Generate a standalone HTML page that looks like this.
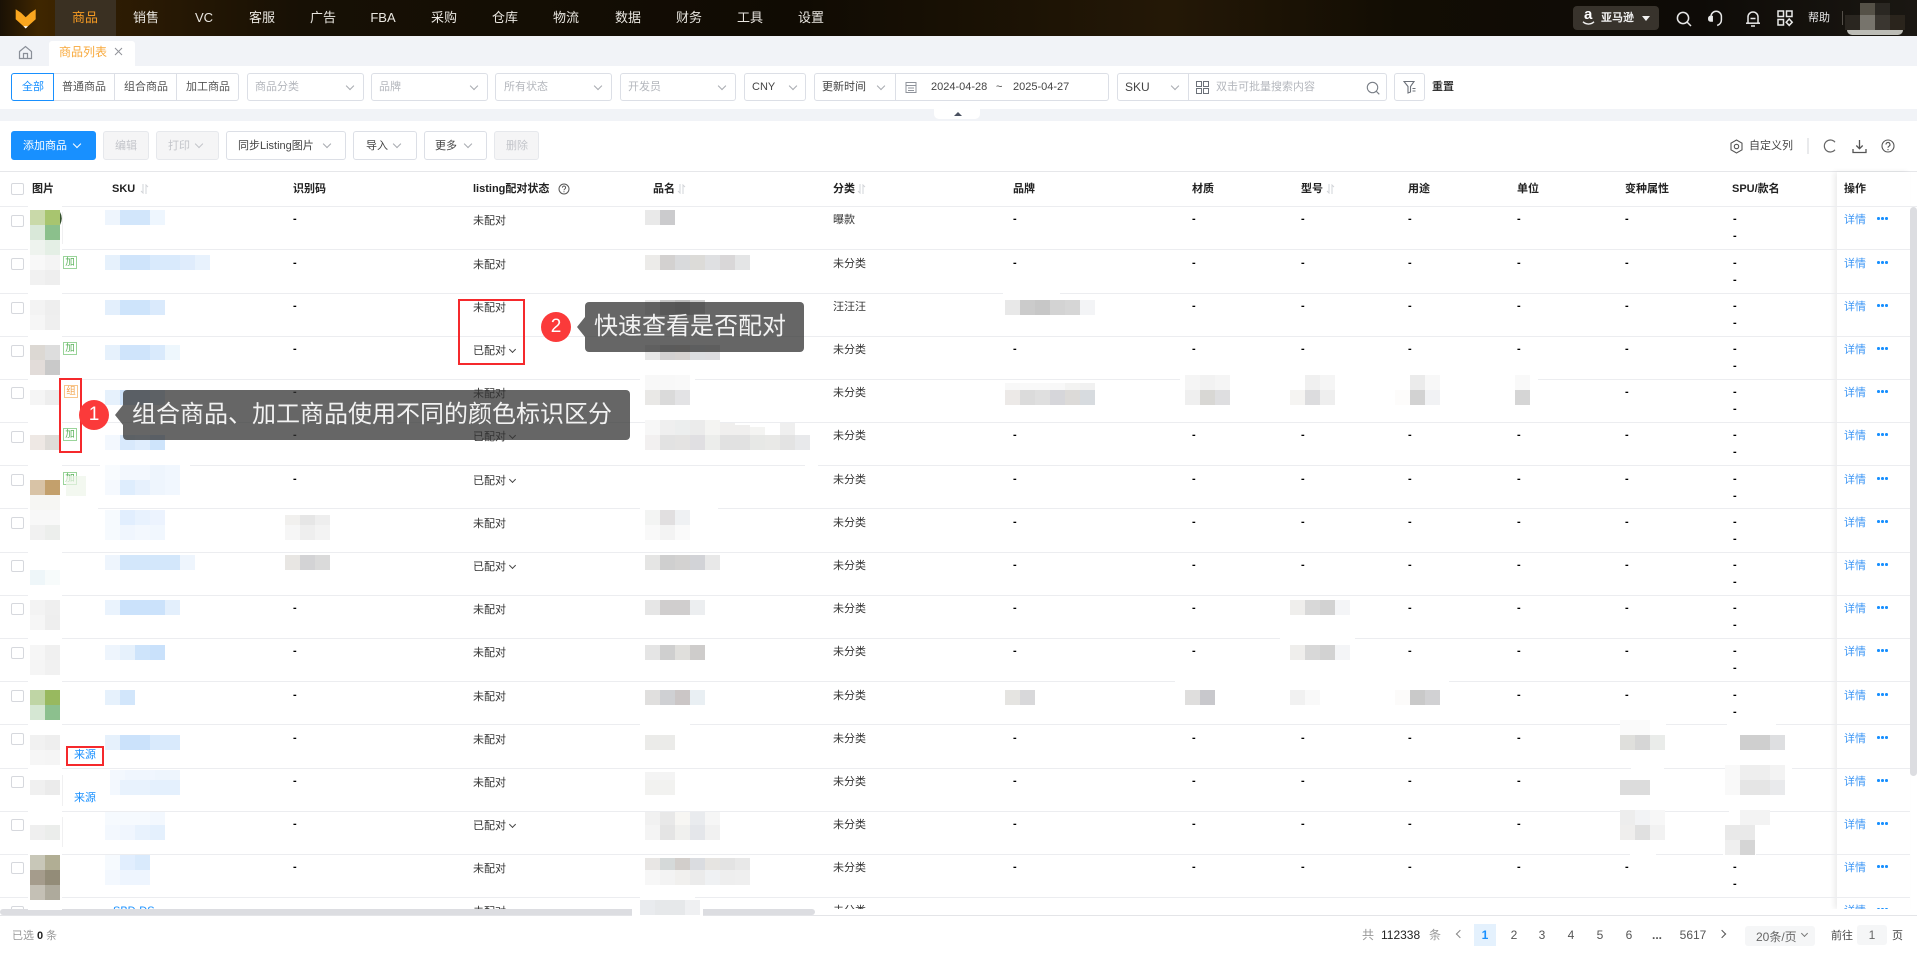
<!DOCTYPE html>
<html lang="zh-CN">
<head>
<meta charset="utf-8">
<title>商品列表</title>
<style>
html,body{margin:0;padding:0;background:#fff}
body{position:relative;width:1917px;height:953px;overflow:hidden;font-family:"Liberation Sans","Noto Sans CJK SC",sans-serif;font-size:11px;color:#333}
.t{position:absolute;white-space:nowrap;line-height:14px;font-size:11px}
.box{position:absolute;box-sizing:border-box}
.ch{position:absolute;width:5px;height:5px;border:solid #a8abb0;border-width:0 1px 1px 0;transform:rotate(45deg)}
.nav{position:absolute;top:0;height:36px;line-height:36px;width:60px;text-align:center;color:#e9e6e0;font-size:13px}
.sel{position:absolute;top:73px;height:28px;box-sizing:border-box;border:1px solid #dcdfe6;border-radius:3px;background:#fff}
.ph{color:#b4b7bd;top:80px}
.dk{color:#444;top:80px}
.btn{position:absolute;top:131px;height:29px;box-sizing:border-box;border:1px solid #dcdfe6;border-radius:3px;background:#fff}
.dis{background:#f5f5f6;border-color:#e6e8ec}
.th{position:absolute;top:182px;line-height:14px;font-size:11px;font-weight:bold;color:#222;white-space:nowrap}
.so{position:absolute;top:184px}
.l{position:absolute;left:0;width:1910px;height:1px;background:#ecedf0}
.wrap{position:absolute;left:0;top:0;width:1917px;height:909px;overflow:hidden}
.r{position:absolute;left:0;width:1910px;height:14px}
.r i{position:absolute;top:0;font-style:normal;white-space:nowrap;line-height:14px;font-size:11px;color:#333}
.r .a,.r .d,.r .e,.r .f,.r .g,.r .h,.r .i,.r .j,.r .j2{top:-1px;color:#000;font-weight:bold}
.r .a{left:293px}.r .b{left:473px;top:1px}.r .c{left:833px}.r .d{left:1013px}.r .e{left:1192px}.r .f{left:1301px}.r .g{left:1408px}.r .h{left:1517px}.r .i{left:1625px}.r .j{left:1733px}.r .j2{left:1733px;top:16px}
.r .k{left:1844px;color:#3c96f5}
.r .m{left:1877px;top:4px;width:2.5px;height:2.5px;background:#1890ff;border-radius:50%;box-shadow:4px 0 #1890ff,8px 0 #1890ff}
.r .v{position:absolute;left:510px;top:4px;width:4px;height:4px;border:solid #444;border-width:0 1px 1px 0;transform:rotate(45deg)}
.cb{position:absolute;left:11px;width:13px;height:12px;box-sizing:border-box;border:1px solid #d6d8dd;border-radius:2px;background:#fff}
.tag{position:absolute;width:14px;height:13px;box-sizing:border-box;border:1px solid #9ad49a;color:#58b158;font-size:9.5px;line-height:11px;text-align:center;background:#fff}
svg.m{position:absolute;left:0;top:0}
svg.m rect{width:15px;height:15px}
.red{position:absolute;box-sizing:border-box;border:2px solid #f5292c}
.num{position:absolute;width:30px;height:30px;border-radius:50%;background:#fb3a3a;color:#fff;font-size:19px;line-height:30px;text-align:center}
.tip{position:absolute;background:rgba(51,51,51,.75);border-radius:4px;color:#f2f2f2;font-size:24px;line-height:50px;white-space:nowrap}
.tipa{position:absolute;width:0;height:0;border-top:10px solid transparent;border-bottom:10px solid transparent;border-right:8px solid rgba(51,51,51,.75)}
.pg{position:absolute;top:928px;width:20px;text-align:center;line-height:14px;font-size:12px;color:#555}
</style>
</head>
<body>

<!-- top header -->
<div class="box" style="left:0;top:0;width:1917px;height:36px;background:linear-gradient(90deg,#1a1105 0,#3f2600 38px,#2e1c03 110px,#171005 300px,#100b03 800px,#241806 1170px,#120d04 1400px,#0e0b07 1700px,#1a1712 100%)"></div>
<svg style="position:absolute;left:0;top:0" width="60" height="36" viewBox="0 0 60 36"><path d="M15.7 9.3L21 12.8 25.7 17.3 30.5 12.8 35.7 9.3V19.3L25.7 28.3 15.7 19.3Z" fill="#f9a61f"/><path d="M23.4 26.2H28L25.7 28.5Z" fill="#fff"/></svg>
<div class="box" style="left:55px;top:0;width:61px;height:36px;background:#3a3022"></div>
<div class="nav" style="left:55px;color:#f59a23">商品</div>
<div class="nav" style="left:116px">销售</div>
<div class="nav" style="left:174px">VC</div>
<div class="nav" style="left:232px">客服</div>
<div class="nav" style="left:293px">广告</div>
<div class="nav" style="left:353px">FBA</div>
<div class="nav" style="left:414px">采购</div>
<div class="nav" style="left:475px">仓库</div>
<div class="nav" style="left:536px">物流</div>
<div class="nav" style="left:598px">数据</div>
<div class="nav" style="left:659px">财务</div>
<div class="nav" style="left:720px">工具</div>
<div class="nav" style="left:781px">设置</div>

<div class="box" style="left:1573px;top:6px;width:86px;height:24px;background:#38332c;border-radius:4px"></div>
<div class="t" style="left:1584px;top:8px;color:#fff;font-size:15px;font-weight:bold">a</div>
<svg style="position:absolute;left:1582px;top:21px" width="13" height="5" viewBox="0 0 13 5"><path d="M1 0.8C4 3.8 9 3.8 12 0.8" stroke="#f2f2f2" stroke-width="1.4" fill="none"/></svg>
<div class="t" style="left:1601px;top:11px;color:#f2f2f2;font-weight:bold">亚马逊</div>
<div class="box" style="left:1642px;top:16px;width:0;height:0;border-left:4px solid transparent;border-right:4px solid transparent;border-top:5px solid #f2f2f2"></div>
<svg style="position:absolute;left:1675px;top:10px" width="18" height="18" viewBox="0 0 18 18" fill="none" stroke="#e8e8e8" stroke-width="1.5"><circle cx="8" cy="8" r="5.6"/><path d="M12 12l4 4"/></svg>
<svg style="position:absolute;left:1707px;top:10px" width="18" height="17" viewBox="0 0 18 17" fill="none" stroke="#e8e8e8" stroke-width="1.5"><path d="M4 6.5a5.2 5.2 0 0 1 10.4 0V10c0 3-2 4.6-4.2 5.5"/><path d="M3.4 6.5h1.8v4.5H3.4a1.6 1.6 0 0 1-1.6-1.6V8.1a1.6 1.6 0 0 1 1.6-1.6z" fill="#e8e8e8"/></svg>
<svg style="position:absolute;left:1744px;top:10px" width="18" height="18" viewBox="0 0 18 18" fill="none" stroke="#e8e8e8" stroke-width="1.5"><path d="M4 13V7a5 5 0 0 1 10 0v6"/><path d="M2 13.2h14"/><path d="M7 16h4"/><path d="M6.5 8.5h5"/></svg>
<svg style="position:absolute;left:1776px;top:9px" width="18" height="18" viewBox="0 0 18 18" fill="none" stroke="#e8e8e8" stroke-width="1.5"><rect x="2" y="2" width="5.5" height="5.5"/><rect x="10.5" y="2" width="5.5" height="5.5"/><rect x="2" y="10.5" width="5.5" height="5.5"/><path d="M13.2 10l3 3.2-3 3.2-3-3.2z"/></svg>
<div class="t" style="left:1808px;top:11px;color:#e8e8e8">帮助</div>
<div class="box" style="left:1842px;top:11px;width:1px;height:14px;background:#55504a"></div>
<div class="box" style="left:1860px;top:3px;width:15px;height:12px;background:#555147"></div>
<div class="box" style="left:1875px;top:3px;width:15px;height:12px;background:#2a2722"></div>
<div class="box" style="left:1845px;top:15px;width:15px;height:15px;background:#2a2620"></div>
<div class="box" style="left:1860px;top:15px;width:15px;height:15px;background:#77746c"></div>
<div class="box" style="left:1875px;top:15px;width:15px;height:15px;background:#3a3630"></div>
<div class="box" style="left:1890px;top:15px;width:15px;height:15px;background:#2a241c"></div>
<div class="box" style="left:1847px;top:30px;width:56px;height:5px;background:#bcbcb6;border-radius:0 0 6px 6px"></div>

<!-- tab bar -->
<div class="box" style="left:0;top:36px;width:1917px;height:30px;background:#f1f3f7"></div>
<svg style="position:absolute;left:18px;top:45px" width="15" height="15" viewBox="0 0 15 15" fill="none" stroke="#8a8f98" stroke-width="1.2"><path d="M1.5 6.5L7.5 1.5l6 5V13.5h-12z"/><path d="M5.5 13.5V8.5h4v5"/></svg>
<div class="box" style="left:49px;top:41px;width:86px;height:25px;background:#fff;border-radius:3px 3px 0 0"></div>
<div class="t" style="left:59px;top:45px;font-size:12px;color:#f8a93c">商品列表</div>
<svg style="position:absolute;left:114px;top:47px" width="9" height="9" viewBox="0 0 9 9" stroke="#909399" stroke-width="1"><path d="M1 1l7 7M8 1L1 8"/></svg>

<!-- filter bar -->
<div class="box" style="left:0;top:66px;width:1917px;height:43px;background:#fff"></div>
<div class="box" style="left:0;top:109px;width:1917px;height:12px;background:#f1f3f7"></div>
<div class="box" style="left:934px;top:109px;width:46px;height:10px;background:#fff;border-radius:0 0 5px 5px"></div>
<div class="box" style="left:954px;top:112px;width:0;height:0;border-left:4px solid transparent;border-right:4px solid transparent;border-bottom:4px solid #4a5160"></div>

<div class="sel" style="left:11px;width:228px"></div>
<div class="box" style="left:11px;top:73px;width:43px;height:28px;border:1px solid #1890ff;border-radius:3px 0 0 3px;background:#fff"></div>
<div class="box" style="left:114px;top:74px;width:1px;height:26px;background:#dcdfe6"></div>
<div class="box" style="left:176px;top:74px;width:1px;height:26px;background:#dcdfe6"></div>
<div class="t" style="left:22px;top:80px;color:#1890ff">全部</div>
<div class="t" style="left:62px;top:80px;color:#555">普通商品</div>
<div class="t" style="left:124px;top:80px;color:#555">组合商品</div>
<div class="t" style="left:186px;top:80px;color:#555">加工商品</div>

<div class="sel" style="left:247px;width:117px"></div><div class="t ph" style="left:255px">商品分类</div><div class="ch" style="left:347px;top:83px"></div>
<div class="sel" style="left:371px;width:117px"></div><div class="t ph" style="left:379px">品牌</div><div class="ch" style="left:471px;top:83px"></div>
<div class="sel" style="left:495px;width:117px"></div><div class="t ph" style="left:504px">所有状态</div><div class="ch" style="left:595px;top:83px"></div>
<div class="sel" style="left:620px;width:116px"></div><div class="t ph" style="left:628px">开发员</div><div class="ch" style="left:719px;top:83px"></div>
<div class="sel" style="left:744px;width:62px"></div><div class="t dk" style="left:752px">CNY</div><div class="ch" style="left:790px;top:83px"></div>
<div class="sel" style="left:814px;width:295px"></div><div class="t dk" style="left:822px">更新时间</div><div class="ch" style="left:878px;top:83px"></div>
<div class="box" style="left:895px;top:74px;width:1px;height:26px;background:#dcdfe6"></div>
<svg style="position:absolute;left:905px;top:81px" width="12" height="12" viewBox="0 0 12 12" fill="none" stroke="#8f939b"><rect x="1" y="1.5" width="10" height="10"/><path d="M1 4.5h10M3 7h6M3 9.5h6"/></svg>
<div class="t dk" style="left:931px">2024-04-28</div>
<div class="t dk" style="left:996px">~</div>
<div class="t dk" style="left:1013px">2025-04-27</div>

<div class="sel" style="left:1117px;width:270px"></div>
<div class="t dk" style="left:1125px;font-size:12px">SKU</div><div class="ch" style="left:1172px;top:83px"></div>
<div class="box" style="left:1188px;top:74px;width:1px;height:26px;background:#dcdfe6"></div>
<svg style="position:absolute;left:1196px;top:81px" width="13" height="13" viewBox="0 0 13 13" fill="none" stroke="#6c7179"><rect x="0.5" y="0.5" width="5" height="5"/><rect x="7.5" y="0.5" width="5" height="5"/><rect x="0.5" y="7.5" width="5" height="5"/><rect x="7.5" y="7.5" width="5" height="5"/></svg>
<div class="t ph" style="left:1216px">双击可批量搜索内容</div>
<svg style="position:absolute;left:1366px;top:81px" width="14" height="14" viewBox="0 0 14 14" fill="none" stroke="#7a7f87" stroke-width="1.1"><circle cx="6.5" cy="6.5" r="5.2"/><path d="M10.3 10.3l3 3"/></svg>
<div class="sel" style="left:1394px;width:31px"></div>
<svg style="position:absolute;left:1403px;top:80px" width="14" height="14" viewBox="0 0 14 14" fill="none" stroke="#6c7179" stroke-width="1.1"><path d="M1 1.5h10L7.5 6.5V12L5 13V6.5z"/><path d="M9.5 8.5h3M9.5 11h3"/></svg>
<div class="t" style="left:1432px;top:80px;color:#333;font-weight:bold">重置</div>

<!-- toolbar -->
<div class="btn" style="left:11px;width:85px;background:#1890ff;border-color:#1890ff"></div>
<div class="t" style="left:23px;top:139px;color:#fff">添加商品</div>
<div class="ch" style="left:74px;top:141px;border-color:#fff"></div>
<div class="btn dis" style="left:103px;width:46px"></div><div class="t" style="left:115px;top:139px;color:#c3c5ca">编辑</div>
<div class="btn dis" style="left:156px;width:63px"></div><div class="t" style="left:168px;top:139px;color:#c3c5ca">打印</div><div class="ch" style="left:196px;top:141px;border-color:#c3c5ca"></div>
<div class="btn" style="left:226px;width:120px"></div><div class="t" style="left:238px;top:139px;color:#444">同步Listing图片</div><div class="ch" style="left:324px;top:141px"></div>
<div class="btn" style="left:353px;width:64px"></div><div class="t" style="left:366px;top:139px;color:#444">导入</div><div class="ch" style="left:394px;top:141px"></div>
<div class="btn" style="left:424px;width:63px"></div><div class="t" style="left:435px;top:139px;color:#444">更多</div><div class="ch" style="left:465px;top:141px"></div>
<div class="btn dis" style="left:494px;width:45px"></div><div class="t" style="left:506px;top:139px;color:#c3c5ca">删除</div>

<svg style="position:absolute;left:1729px;top:139px" width="15" height="15" viewBox="0 0 15 15" fill="none" stroke="#555" stroke-width="1.1"><path d="M7.5 1L13 4.2v6.6L7.5 14 2 10.8V4.2z"/><circle cx="7.5" cy="7.5" r="2.2"/></svg>
<div class="t" style="left:1749px;top:139px;color:#444">自定义列</div>
<div class="box" style="left:1807px;top:138px;width:2px;height:16px;background:#e9eaec"></div>
<svg style="position:absolute;left:1823px;top:139px" width="14" height="14" viewBox="0 0 14 14" fill="none" stroke="#666" stroke-width="1.2"><path d="M12 3.2A6 6 0 1 0 12 10.8"/></svg>
<svg style="position:absolute;left:1852px;top:139px" width="15" height="15" viewBox="0 0 15 15" fill="none" stroke="#555" stroke-width="1.3"><path d="M7.5 1v8.5M4.3 6.5l3.2 3.2 3.2-3.2"/><path d="M1 10v3.5h13V10"/></svg>
<svg style="position:absolute;left:1881px;top:139px" width="14" height="14" viewBox="0 0 14 14" fill="none" stroke="#555" stroke-width="1.1"><circle cx="7" cy="7" r="6"/><path d="M5 5.5a2 2 0 1 1 3 1.7c-.7.4-1 .8-1 1.6"/><path d="M7 10v1.2"/></svg>

<!-- table head -->
<div class="box" style="left:0;top:171px;width:1917px;height:1px;background:#e6e7ea"></div>
<div class="box" style="left:1837px;top:172px;width:73px;height:737px;background:#fff;box-shadow:-3px 0 5px rgba(0,0,0,.07)"></div>
<div class="cb" style="top:183px"></div>
<div class="th" style="left:32px">图片</div>
<div class="th" style="left:112px">SKU</div>
<svg class="so" style="left:140px" width="9" height="10" viewBox="0 0 9 10" fill="none" stroke="#d2d4d8"><path d="M3 0v9L1 7M6 10V1l2 2"/></svg>
<div class="th" style="left:293px">识别码</div>
<div class="th" style="left:473px">listing配对状态</div>
<svg style="position:absolute;left:558px;top:183px" width="12" height="12" viewBox="0 0 12 12" fill="none" stroke="#555"><circle cx="6" cy="6" r="5"/><path d="M4.4 4.6a1.6 1.6 0 1 1 2.4 1.4c-.5.3-.8.6-.8 1.2M6 8.3v1"/></svg>
<div class="th" style="left:653px">品名</div>
<svg class="so" style="left:677px" width="9" height="10" viewBox="0 0 9 10" fill="none" stroke="#d2d4d8"><path d="M3 0v9L1 7M6 10V1l2 2"/></svg>
<div class="th" style="left:833px">分类</div>
<svg class="so" style="left:857px" width="9" height="10" viewBox="0 0 9 10" fill="none" stroke="#d2d4d8"><path d="M3 0v9L1 7M6 10V1l2 2"/></svg>
<div class="th" style="left:1013px">品牌</div>
<div class="th" style="left:1192px">材质</div>
<div class="th" style="left:1301px">型号</div>
<svg class="so" style="left:1326px" width="9" height="10" viewBox="0 0 9 10" fill="none" stroke="#d2d4d8"><path d="M3 0v9L1 7M6 10V1l2 2"/></svg>
<div class="th" style="left:1408px">用途</div>
<div class="th" style="left:1517px">单位</div>
<div class="th" style="left:1625px">变种属性</div>
<div class="th" style="left:1732px">SPU/款名</div>
<div class="th" style="left:1844px">操作</div>

<!-- row lines -->
<div class="l" style="top:206px;width:1917px"></div><div class="l" style="top:249px"></div><div class="l" style="top:293px"></div><div class="l" style="top:336px"></div><div class="l" style="top:379px"></div><div class="l" style="top:422px"></div><div class="l" style="top:465px"></div><div class="l" style="top:508px"></div><div class="l" style="top:552px"></div><div class="l" style="top:595px"></div><div class="l" style="top:638px"></div><div class="l" style="top:681px"></div><div class="l" style="top:724px"></div><div class="l" style="top:768px"></div><div class="l" style="top:811px"></div><div class="l" style="top:854px"></div><div class="l" style="top:897px"></div>

<!-- rows -->
<div class="wrap">
<div class="cb" style="top:215px"></div><div class="cb" style="top:258px"></div><div class="cb" style="top:302px"></div><div class="cb" style="top:345px"></div><div class="cb" style="top:387px"></div><div class="cb" style="top:431px"></div><div class="cb" style="top:474px"></div><div class="cb" style="top:517px"></div><div class="cb" style="top:560px"></div><div class="cb" style="top:603px"></div><div class="cb" style="top:647px"></div><div class="cb" style="top:690px"></div><div class="cb" style="top:733px"></div><div class="cb" style="top:776px"></div><div class="cb" style="top:819px"></div><div class="cb" style="top:862px"></div><div class="cb" style="top:906px"></div>

<div class="r" style="top:213px"><i class="a">-</i><i class="b">未配对</i><i class="c">曝款</i><i class="d">-</i><i class="e">-</i><i class="f">-</i><i class="g">-</i><i class="h">-</i><i class="i">-</i><i class="j">-</i><i class="j2">-</i><i class="k">详情</i><i class="m"></i></div>
<div class="r" style="top:257px"><i class="a">-</i><i class="b">未配对</i><i class="c">未分类</i><i class="d">-</i><i class="e">-</i><i class="f">-</i><i class="g">-</i><i class="h">-</i><i class="i">-</i><i class="j">-</i><i class="j2">-</i><i class="k">详情</i><i class="m"></i></div>
<div class="r" style="top:300px"><i class="a">-</i><i class="b">未配对</i><i class="c">汪汪汪</i><i class="e">-</i><i class="f">-</i><i class="g">-</i><i class="h">-</i><i class="i">-</i><i class="j">-</i><i class="j2">-</i><i class="k">详情</i><i class="m"></i></div>
<div class="r" style="top:343px"><i class="a">-</i><i class="b">已配对</i><i class="v"></i><i class="c">未分类</i><i class="d">-</i><i class="e">-</i><i class="f">-</i><i class="g">-</i><i class="h">-</i><i class="i">-</i><i class="j">-</i><i class="j2">-</i><i class="k">详情</i><i class="m"></i></div>
<div class="r" style="top:386px"><i class="a">-</i><i class="b">未配对</i><i class="c">未分类</i><i class="i">-</i><i class="j">-</i><i class="j2">-</i><i class="k">详情</i><i class="m"></i></div>
<div class="r" style="top:429px"><i class="a">-</i><i class="b">已配对</i><i class="v"></i><i class="c">未分类</i><i class="d">-</i><i class="e">-</i><i class="f">-</i><i class="g">-</i><i class="h">-</i><i class="i">-</i><i class="j">-</i><i class="j2">-</i><i class="k">详情</i><i class="m"></i></div>
<div class="r" style="top:473px"><i class="a">-</i><i class="b">已配对</i><i class="v"></i><i class="c">未分类</i><i class="d">-</i><i class="e">-</i><i class="f">-</i><i class="g">-</i><i class="h">-</i><i class="i">-</i><i class="j">-</i><i class="j2">-</i><i class="k">详情</i><i class="m"></i></div>
<div class="r" style="top:516px"><i class="b">未配对</i><i class="c">未分类</i><i class="d">-</i><i class="e">-</i><i class="f">-</i><i class="g">-</i><i class="h">-</i><i class="i">-</i><i class="j">-</i><i class="j2">-</i><i class="k">详情</i><i class="m"></i></div>
<div class="r" style="top:559px"><i class="b">已配对</i><i class="v"></i><i class="c">未分类</i><i class="d">-</i><i class="e">-</i><i class="f">-</i><i class="g">-</i><i class="h">-</i><i class="i">-</i><i class="j">-</i><i class="j2">-</i><i class="k">详情</i><i class="m"></i></div>
<div class="r" style="top:602px"><i class="a">-</i><i class="b">未配对</i><i class="c">未分类</i><i class="d">-</i><i class="e">-</i><i class="g">-</i><i class="h">-</i><i class="i">-</i><i class="j">-</i><i class="j2">-</i><i class="k">详情</i><i class="m"></i></div>
<div class="r" style="top:645px"><i class="a">-</i><i class="b">未配对</i><i class="c">未分类</i><i class="d">-</i><i class="e">-</i><i class="g">-</i><i class="h">-</i><i class="i">-</i><i class="j">-</i><i class="j2">-</i><i class="k">详情</i><i class="m"></i></div>
<div class="r" style="top:689px"><i class="a">-</i><i class="b">未配对</i><i class="c">未分类</i><i class="h">-</i><i class="i">-</i><i class="j">-</i><i class="j2">-</i><i class="k">详情</i><i class="m"></i></div>
<div class="r" style="top:732px"><i class="a">-</i><i class="b">未配对</i><i class="c">未分类</i><i class="d">-</i><i class="e">-</i><i class="f">-</i><i class="g">-</i><i class="h">-</i><i class="k">详情</i><i class="m"></i></div>
<div class="r" style="top:775px"><i class="a">-</i><i class="b">未配对</i><i class="c">未分类</i><i class="d">-</i><i class="e">-</i><i class="f">-</i><i class="g">-</i><i class="h">-</i><i class="k">详情</i><i class="m"></i></div>
<div class="r" style="top:818px"><i class="a">-</i><i class="b">已配对</i><i class="v"></i><i class="c">未分类</i><i class="d">-</i><i class="e">-</i><i class="f">-</i><i class="g">-</i><i class="h">-</i><i class="k">详情</i><i class="m"></i></div>
<div class="r" style="top:861px"><i class="a">-</i><i class="b">未配对</i><i class="c">未分类</i><i class="d">-</i><i class="e">-</i><i class="f">-</i><i class="g">-</i><i class="h">-</i><i class="i">-</i><i class="j">-</i><i class="j2">-</i><i class="k">详情</i><i class="m"></i></div>
<div class="r" style="top:904px"><i style="left:113px;color:#1890ff">SBD-DS</i><i class="b">未配对</i><i class="c">未分类</i><i class="k">详情</i><i class="m"></i></div>
</div>

<!-- footer -->
<div class="box" style="left:0;top:909px;width:1917px;height:44px;background:#fff"></div>
<div class="box" style="left:0;top:909px;width:815px;height:6px;background:#dcdde1;border-radius:3px"></div>
<div class="box" style="left:0;top:915px;width:1917px;height:1px;background:#e4e5e8"></div>
<div class="box" style="left:1910px;top:207px;width:7px;height:569px;background:#dcdde1;border-radius:4px"></div>
<div class="t" style="left:12px;top:929px;color:#999">已选</div>
<div class="t" style="left:37px;top:929px;color:#222;font-weight:bold">0</div>
<div class="t" style="left:46px;top:929px;color:#999">条</div>
<div class="t" style="left:1362px;top:928px;color:#999;font-size:12px">共</div>
<div class="t" style="left:1381px;top:928px;color:#222;font-size:12px">112338</div>
<div class="t" style="left:1429px;top:928px;color:#999;font-size:12px">条</div>
<div class="box" style="left:1457px;top:931px;width:6px;height:6px;border:solid #888;border-width:0 0 1px 1px;transform:rotate(45deg)"></div>
<div class="box" style="left:1474px;top:924px;width:22px;height:22px;background:#e4f1fd"></div>
<div class="pg" style="left:1475px;color:#1890ff;font-weight:bold">1</div>
<div class="pg" style="left:1504px">2</div>
<div class="pg" style="left:1532px">3</div>
<div class="pg" style="left:1561px">4</div>
<div class="pg" style="left:1590px">5</div>
<div class="pg" style="left:1619px">6</div>
<div class="pg" style="left:1647px;font-weight:bold">...</div>
<div class="pg" style="left:1673px;width:40px">5617</div>
<div class="box" style="left:1719px;top:931px;width:6px;height:6px;border:solid #555;border-width:1px 1px 0 0;transform:rotate(45deg)"></div>
<div class="box" style="left:1745px;top:926px;width:70px;height:20px;background:#f5f6f7;border-radius:3px"></div>
<div class="t" style="left:1756px;top:930px;color:#666;font-size:12px">20条/页</div>
<div class="ch" style="left:1802px;top:931px;width:4px;height:4px;border-color:#777"></div>
<div class="t" style="left:1831px;top:929px;color:#444">前往</div>
<div class="box" style="left:1857px;top:925px;width:30px;height:20px;background:#f5f6f7;border-radius:3px"></div>
<div class="t" style="left:1857px;top:928px;width:30px;text-align:center;color:#666;font-size:12px">1</div>
<div class="t" style="left:1892px;top:929px;color:#444">页</div>

<!-- tags under mosaic -->
<div class="tag" style="left:63px;top:256px">加</div>
<div class="tag" style="left:63px;top:342px">加</div>
<div class="tag" style="left:63px;top:428px">加</div>
<div class="tag" style="left:63px;top:472px">加</div>
<div class="tag" style="left:64px;top:385px;border-color:#f7c68c;color:#f2a24a">组</div>

<!-- mosaic redaction -->
<svg class="m" width="1917" height="953" viewBox="0 0 1917 953">
<path fill="#fff" d="M28 206h34v704H28zM62 505h34v30H62zM100 465h90v4h-90zM28 505h70v4H28zM640 508h78v3h-78zM640 379h55v3h-55zM640 722h50v4h-50zM640 895h55v4h-55zM1003 291h57v4h-57zM1180 377h358v4h-358zM805 463h13v4h-13zM1280 636h75v4h-75zM1175 679h274v4h-274zM1620 722h46v4h-46zM1727 722h49v4h-49zM1631 766h33v4h-33zM1727 766h65v4h-65zM1620 809h42v4h-42zM1729 809h27v4h-27zM1630 852h26v4h-26zM1723 852h33v4h-33zM632 898h71v30h-71z"/>
<path fill="#f0f0f1" d="M62 212h1v32h-1zM62 775h1v31h-1zM62 817h1v30h-1z"/>
<path fill="#eef5ea" d="M66 476h20v20H66z" opacity=".7"/>
<path fill="#34502c" d="M60 212q3.5 6 0 13z"/>
<!-- images -->
<rect x="30" y="210" fill="#c9d9a9"/><rect x="45" y="210" fill="#a8c56f"/><rect x="30" y="225" fill="#d9e8d9"/><rect x="45" y="225" fill="#8bc08c"/><rect x="30" y="240" fill="#eef3ee"/><rect x="45" y="240" fill="#e4efe5"/>
<rect x="30" y="255" fill="#f8f8f8"/><rect x="45" y="255" fill="#f4f4f4"/><rect x="30" y="270" fill="#f1f1f1"/><rect x="45" y="270" fill="#eee"/>
<rect x="30" y="300" fill="#f3f3f3"/><rect x="45" y="300" fill="#eee"/><rect x="30" y="315" fill="#f6f6f6"/><rect x="45" y="315" fill="#efefef"/>
<rect x="30" y="345" fill="#dcd8d3"/><rect x="45" y="345" fill="#ddd"/><rect x="30" y="360" fill="#e2dcd9"/><rect x="45" y="360" fill="#c9c9c9"/>
<rect x="30" y="390" fill="#f5f5f5"/><rect x="45" y="390" fill="#eee"/>
<rect x="30" y="435" fill="#eee8e4"/><rect x="45" y="435" fill="#dfdcd8"/>
<rect x="30" y="480" fill="#d8c3a6"/><rect x="45" y="480" fill="#c3a06c"/><rect x="30" y="495" fill="#f6f6f3"/><rect x="45" y="495" fill="#f6f6f3"/>
<rect x="30" y="510" fill="#f8f8f8"/><rect x="45" y="510" fill="#f8f8f8"/><rect x="30" y="525" fill="#f1f1f1"/><rect x="45" y="525" fill="#eceeec"/>
<rect x="30" y="570" fill="#eef6f9"/><rect x="45" y="570" fill="#f7fbfb"/>
<rect x="30" y="600" fill="#f3f3f3"/><rect x="45" y="600" fill="#efefef"/><rect x="30" y="615" fill="#f6f6f6"/><rect x="45" y="615" fill="#eee"/>
<rect x="30" y="645" fill="#f6f6f6"/><rect x="45" y="645" fill="#f0f0f0"/><rect x="30" y="660" fill="#f5f5f5"/><rect x="45" y="660" fill="#f1f1f1"/>
<rect x="30" y="690" fill="#bfd5a5"/><rect x="45" y="690" fill="#98b95f"/><rect x="30" y="705" fill="#d5e7d3"/><rect x="45" y="705" fill="#8cc08e"/>
<rect x="30" y="735" fill="#f1f1f1"/><rect x="45" y="735" fill="#eee"/><rect x="30" y="750" fill="#f6f6f6"/><rect x="45" y="750" fill="#f5f5f5"/>
<rect x="30" y="780" fill="#f0f0f0"/><rect x="45" y="780" fill="#ebebeb"/>
<rect x="30" y="825" fill="#efefef"/><rect x="45" y="825" fill="#ebedeb"/>
<rect x="30" y="855" fill="#c8c7b8"/><rect x="45" y="855" fill="#b1ae94"/><rect x="30" y="870" fill="#a59c8c"/><rect x="45" y="870" fill="#938c78"/><rect x="30" y="885" fill="#c4c0b5"/><rect x="45" y="885" fill="#aeaa9c"/>
<!-- sku -->
<rect x="105" y="210" fill="#eef5fd"/><rect x="120" y="210" fill="#d2e6fb"/><rect x="135" y="210" fill="#d2e6fb"/><rect x="150" y="210" fill="#eef6fe"/>
<rect x="105" y="255" fill="#e6f1fc"/><rect x="120" y="255" fill="#cfe4fb"/><rect x="135" y="255" fill="#cfe4fb"/><rect x="150" y="255" fill="#d9eafc"/><rect x="165" y="255" fill="#d9eafc"/><rect x="180" y="255" fill="#dfecfc"/><rect x="195" y="255" fill="#e8f2fd"/>
<rect x="105" y="300" fill="#e3effc"/><rect x="120" y="300" fill="#cee4fb"/><rect x="135" y="300" fill="#cee4fb"/><rect x="150" y="300" fill="#daeafc"/>
<rect x="105" y="345" fill="#e6f1fc"/><rect x="120" y="345" fill="#cfe4fb"/><rect x="135" y="345" fill="#cfe4fb"/><rect x="150" y="345" fill="#d9eafc"/><rect x="165" y="345" fill="#eef7fd"/>
<rect x="105" y="390" fill="#e6f1fc"/><rect x="120" y="390" fill="#cfe4fb"/><rect x="135" y="390" fill="#cfe4fb"/><rect x="150" y="390" fill="#d9eafc"/>
<rect x="105" y="435" fill="#f3f8fe"/><rect x="120" y="435" fill="#d8e9fc"/><rect x="135" y="435" fill="#dfedfd"/><rect x="150" y="435" fill="#cee4fb"/>
<rect x="105" y="465" fill="#f8fbfe"/><rect x="120" y="465" fill="#f3f8fe"/><rect x="135" y="465" fill="#f3f8fe"/><rect x="150" y="465" fill="#eef5fd"/><rect x="165" y="465" fill="#f1f7fe"/>
<rect x="105" y="480" fill="#f5f9fe"/><rect x="120" y="480" fill="#deedfd"/><rect x="135" y="480" fill="#e7f1fd"/><rect x="150" y="480" fill="#eef5fd"/><rect x="165" y="480" fill="#f1f7fe"/>
<rect x="105" y="510" fill="#f6fafe"/><rect x="120" y="510" fill="#e1eefe"/><rect x="135" y="510" fill="#e8f2fe"/><rect x="150" y="510" fill="#ecf3fe"/><rect x="105" y="525" fill="#f6fafe"/><rect x="120" y="525" fill="#f0f6fe"/><rect x="135" y="525" fill="#f3f8fe"/><rect x="150" y="525" fill="#f1f7fe"/>
<rect x="105" y="555" fill="#eef5fd"/><rect x="120" y="555" fill="#d3e7fb"/><rect x="135" y="555" fill="#d3e7fb"/><rect x="150" y="555" fill="#d3e7fb"/><rect x="165" y="555" fill="#d3e7fb"/><rect x="180" y="555" fill="#eef5fd"/>
<rect x="105" y="600" fill="#eaf3fd"/><rect x="120" y="600" fill="#cbe2fb"/><rect x="135" y="600" fill="#cbe2fb"/><rect x="150" y="600" fill="#cbe2fb"/><rect x="165" y="600" fill="#e3effc"/>
<rect x="105" y="645" fill="#eef5fd"/><rect x="120" y="645" fill="#e6f1fc"/><rect x="135" y="645" fill="#cee4fb"/><rect x="150" y="645" fill="#c9e1fb"/>
<rect x="105" y="690" fill="#e6f1fc"/><rect x="120" y="690" fill="#d2e6fb"/>
<rect x="105" y="735" fill="#e6f1fc"/><rect x="120" y="735" fill="#cbe2fb"/><rect x="135" y="735" fill="#cbe2fb"/><rect x="150" y="735" fill="#d9eafc"/><rect x="165" y="735" fill="#d9eafc"/>
<rect x="110" y="770" fill="#f3f8fe"/><rect x="125" y="770" fill="#f0f6fe"/><rect x="140" y="770" fill="#f0f6fe"/><rect x="155" y="770" fill="#eef5fd"/><rect x="165" y="770" fill="#eef5fd"/><rect x="110" y="780" fill="#f3f8fe"/><rect x="120" y="780" fill="#e8f2fd"/><rect x="135" y="780" fill="#e8f2fd"/><rect x="150" y="780" fill="#e4f0fd"/><rect x="165" y="780" fill="#e4f0fd"/>
<rect x="105" y="812" fill="#f6fafe"/><rect x="120" y="812" fill="#f6fafe"/><rect x="135" y="812" fill="#f6fafe"/><rect x="150" y="812" fill="#f3f8fe"/><rect x="105" y="825" fill="#f3f8fe"/><rect x="120" y="825" fill="#f0f6fe"/><rect x="135" y="825" fill="#e8f2fd"/><rect x="150" y="825" fill="#e4f0fd"/>
<rect x="105" y="855" fill="#f6fafe"/><rect x="120" y="855" fill="#e1eefe"/><rect x="135" y="855" fill="#d9eafc"/><rect x="105" y="870" fill="#f3f8fe"/><rect x="120" y="870" fill="#eef5fe"/><rect x="135" y="870" fill="#eef5fe"/>
<!-- code -->
<rect x="285" y="515" fill="#f1f0ee"/><rect x="300" y="515" fill="#e6e6e6"/><rect x="315" y="515" fill="#eee"/><rect x="285" y="525" fill="#f6f6f6"/><rect x="300" y="525" fill="#eee"/><rect x="315" y="525" fill="#f3f3f3"/>
<rect x="285" y="555" fill="#e8e6e3"/><rect x="300" y="555" fill="#d3d3d5"/><rect x="315" y="555" fill="#dadada"/>
<!-- name -->
<rect x="645" y="210" fill="#e9e9e9"/><rect x="660" y="210" fill="#cbcbcd"/>
<rect x="645" y="255" fill="#ecebe9"/><rect x="660" y="255" fill="#d3d1d0"/><rect x="675" y="255" fill="#d9dadc"/><rect x="690" y="255" fill="#dcdbd8"/><rect x="705" y="255" fill="#dfe0e2"/><rect x="720" y="255" fill="#d9d7d8"/><rect x="735" y="255" fill="#e4e5e6"/>
<rect x="645" y="300" fill="#e8e8e8"/><rect x="660" y="300" fill="#c6c6c6"/><rect x="675" y="300" fill="#bdbdbd"/><rect x="690" y="300" fill="#cfcfcf"/>
<rect x="645" y="345" fill="#e8e8e8"/><rect x="660" y="345" fill="#d3d1d1"/><rect x="675" y="345" fill="#d6d2d0"/><rect x="690" y="345" fill="#dcdee1"/><rect x="705" y="345" fill="#dddde0"/>
<rect x="645" y="375" fill="#f8f8f8"/><rect x="660" y="375" fill="#f8f8f8"/><rect x="675" y="375" fill="#f9f9f9"/><rect x="645" y="390" fill="#e9e8e6"/><rect x="660" y="390" fill="#dadada"/><rect x="675" y="390" fill="#e3e3e5"/>
<rect x="645" y="420" fill="#f7f7f7"/><rect x="660" y="420" fill="#efefef"/><rect x="675" y="420" fill="#eceeee"/><rect x="690" y="420" fill="#ebebeb"/><rect x="705" y="420" fill="#f4f4f2"/><rect x="720" y="423" fill="#f0efee"/><rect x="735" y="425" fill="#f0efee"/><rect x="750" y="427" fill="#f4f4f2"/><rect x="780" y="423" fill="#efefef"/>
<rect x="645" y="435" fill="#f2f0f0"/><rect x="660" y="435" fill="#e2e2e2"/><rect x="675" y="435" fill="#e4e3e2"/><rect x="690" y="435" fill="#e0dfe2"/><rect x="705" y="435" fill="#ecedeb"/><rect x="720" y="435" fill="#e1e1e1"/><rect x="735" y="435" fill="#e1e1e1"/><rect x="750" y="435" fill="#e7e8e6"/><rect x="765" y="435" fill="#e9e9e7"/><rect x="780" y="435" fill="#e3e3e3"/><rect x="795" y="435" fill="#e8e9eb"/>
<rect x="645" y="510" fill="#f3f4f3"/><rect x="660" y="510" fill="#e1dfe0"/><rect x="675" y="510" fill="#eff1f3"/><rect x="645" y="525" fill="#f9f9f9"/><rect x="660" y="525" fill="#f3f3f3"/><rect x="675" y="525" fill="#fafafa"/>
<rect x="645" y="555" fill="#e5e5e4"/><rect x="660" y="555" fill="#cfcfcf"/><rect x="675" y="555" fill="#d3d2d1"/><rect x="690" y="555" fill="#d2d3d7"/><rect x="705" y="555" fill="#e8e8e8"/>
<rect x="645" y="600" fill="#e6e6e6"/><rect x="660" y="600" fill="#d0cece"/><rect x="675" y="600" fill="#d0cece"/><rect x="690" y="600" fill="#eceef0"/>
<rect x="645" y="645" fill="#e5e5e5"/><rect x="660" y="645" fill="#cfcfcf"/><rect x="675" y="645" fill="#e0dfdc"/><rect x="690" y="645" fill="#cecccb"/>
<rect x="645" y="690" fill="#e0dfde"/><rect x="660" y="690" fill="#cfd0d3"/><rect x="675" y="690" fill="#cbc6c6"/><rect x="690" y="690" fill="#e9eff3"/>
<rect x="645" y="735" fill="#ebebe9"/><rect x="660" y="735" fill="#ebebe9"/>
<rect x="645" y="772" fill="#f4f4f4"/><rect x="660" y="772" fill="#f4f4f4"/><rect x="645" y="780" fill="#f2f2f0"/><rect x="660" y="780" fill="#f2f2f0"/>
<rect x="645" y="812" fill="#f1f1f1"/><rect x="660" y="812" fill="#e8e8e8"/><rect x="675" y="812" fill="#f7f6f3"/><rect x="690" y="812" fill="#e9ebee"/><rect x="705" y="812" fill="#f6f6f6"/><rect x="645" y="825" fill="#f4f4f4"/><rect x="660" y="825" fill="#e4e4e4"/><rect x="675" y="825" fill="#f0f0ee"/><rect x="690" y="825" fill="#e4e6ea"/><rect x="705" y="825" fill="#f1f1f1"/>
<rect x="645" y="858" fill="#e8e6e4"/><rect x="660" y="858" fill="#d5d9d9"/><rect x="675" y="858" fill="#d2cecb"/><rect x="690" y="858" fill="#dadce0"/><rect x="705" y="858" fill="#e6e4e1"/><rect x="720" y="858" fill="#e3e3e3"/><rect x="735" y="858" fill="#e8e8e8"/>
<rect x="645" y="870" fill="#f7f7f7"/><rect x="660" y="870" fill="#f3f3f3"/><rect x="675" y="870" fill="#f1f0ee"/><rect x="690" y="870" fill="#ebebeb"/><rect x="705" y="870" fill="#eff1f3"/><rect x="720" y="870" fill="#eee"/><rect x="735" y="870" fill="#efefef"/>
<rect x="640" y="900" fill="#e9ebee"/><rect x="655" y="900" fill="#e6e8ea"/><rect x="670" y="900" fill="#e6e8ea"/><rect x="685" y="900" fill="#eff0f2"/>
<!-- brand -->
<rect x="1005" y="300" fill="#e8e8e8"/><rect x="1020" y="300" fill="#cbcbcb"/><rect x="1035" y="300" fill="#c7c7c7"/><rect x="1050" y="300" fill="#d3d3d3"/><rect x="1065" y="300" fill="#d6d6d6"/><rect x="1080" y="300" fill="#f3f4f6"/>
<rect x="1005" y="383" fill="#f8f8f8"/><rect x="1020" y="383" fill="#f9f9f9"/><rect x="1035" y="383" fill="#f9f9f9"/><rect x="1050" y="383" fill="#f8f8f8"/><rect x="1065" y="383" fill="#f3f3f2"/><rect x="1080" y="383" fill="#f1f1f1"/>
<rect x="1005" y="390" fill="#ece9e7"/><rect x="1020" y="390" fill="#dbdbdb"/><rect x="1035" y="390" fill="#dfdfdf"/><rect x="1050" y="390" fill="#d6d6da"/><rect x="1065" y="390" fill="#dcdad8"/><rect x="1080" y="390" fill="#d7dbdf"/>
<rect x="1005" y="690" fill="#e5e4e1"/><rect x="1020" y="690" fill="#d8d8da"/>
<!-- material -->
<rect x="1185" y="375" fill="#f5f5f5"/><rect x="1200" y="375" fill="#f2f2f2"/><rect x="1215" y="375" fill="#f5f5f5"/><rect x="1185" y="390" fill="#efefef"/><rect x="1200" y="390" fill="#d8d7d4"/><rect x="1215" y="390" fill="#dedee0"/>
<rect x="1185" y="690" fill="#dfdedd"/><rect x="1200" y="690" fill="#c8c8cc"/>
<!-- model etc -->
<rect x="1305" y="375" fill="#f0f0f0"/><rect x="1320" y="375" fill="#f5f5f5"/><rect x="1290" y="390" fill="#f5f4f2"/><rect x="1305" y="390" fill="#dcdcde"/><rect x="1320" y="390" fill="#eee"/>
<rect x="1410" y="375" fill="#ebebeb"/><rect x="1425" y="375" fill="#f8f8f8"/><rect x="1395" y="390" fill="#fdfcfb"/><rect x="1410" y="390" fill="#d2d2d2"/><rect x="1425" y="390" fill="#f1f2f4"/>
<rect x="1515" y="375" fill="#f9f9f9"/><rect x="1515" y="390" fill="#d5d5d5"/>
<rect x="1290" y="600" fill="#efeeec"/><rect x="1305" y="600" fill="#d8d8d8"/><rect x="1320" y="600" fill="#d2d2d2"/><rect x="1335" y="600" fill="#f4f5f7"/>
<rect x="1290" y="645" fill="#efeeec"/><rect x="1305" y="645" fill="#d8d8d8"/><rect x="1320" y="645" fill="#d2d2d2"/><rect x="1335" y="645" fill="#f4f5f7"/>
<rect x="1290" y="690" fill="#f1f1f1"/><rect x="1305" y="690" fill="#f9f9f9"/>
<rect x="1395" y="690" fill="#fcfbfa"/><rect x="1410" y="690" fill="#c9c9c9"/><rect x="1425" y="690" fill="#d1d1d3"/>
<!-- variant -->
<rect x="1620" y="720" fill="#fafafa"/><rect x="1635" y="720" fill="#fafafa"/><rect x="1620" y="735" fill="#dfdfdc"/><rect x="1635" y="735" fill="#d6d6d6"/><rect x="1650" y="735" fill="#eaecea"/>
<rect x="1620" y="780" fill="#dcdcdc"/><rect x="1635" y="780" fill="#dcdcdc"/>
<rect x="1620" y="810" fill="#ededed"/><rect x="1635" y="810" fill="#f2f3f5"/><rect x="1650" y="810" fill="#f7f7f7"/><rect x="1620" y="825" fill="#efeeed"/><rect x="1635" y="825" fill="#e0e0e0"/><rect x="1650" y="825" fill="#f2f2f2"/>
<!-- spu -->
<rect x="1740" y="735" fill="#cfcfcf"/><rect x="1755" y="735" fill="#cfcfcf"/><rect x="1770" y="735" fill="#dedfe1"/>
<rect x="1725" y="765" fill="#f9f9f9"/><rect x="1740" y="765" fill="#eee"/><rect x="1755" y="765" fill="#eee"/><rect x="1770" y="765" fill="#f3f3f3"/><rect x="1725" y="780" fill="#f9f9f9"/><rect x="1740" y="780" fill="#e5e5e5"/><rect x="1755" y="780" fill="#e5e5e5"/><rect x="1770" y="780" fill="#e9eaec"/>
<rect x="1740" y="810" fill="#f3f3f3"/><rect x="1755" y="810" fill="#f3f3f3"/><rect x="1725" y="825" fill="#e9e9e9"/><rect x="1740" y="825" fill="#e9e9e9"/><rect x="1725" y="840" fill="#efefef"/><rect x="1740" y="840" fill="#d5d5d5"/>
</svg>

<!-- source links -->
<div class="t" style="left:74px;top:748px;color:#1890ff">来源</div>
<div class="t" style="left:74px;top:791px;color:#1890ff">来源</div>

<!-- annotations -->
<div class="red" style="left:59px;top:378px;width:23px;height:75px"></div>
<div class="red" style="left:458px;top:299px;width:67px;height:66px"></div>
<div class="red" style="left:66px;top:746px;width:38px;height:20px"></div>
<div class="num" style="left:79px;top:400px">1</div>
<div class="tipa" style="left:115px;top:405px"></div>
<div class="tip" style="left:123px;top:390px;width:507px;height:50px;padding-left:9px;box-sizing:border-box">组合商品、加工商品使用不同的颜色标识区分</div>
<div class="num" style="left:541px;top:312px">2</div>
<div class="tipa" style="left:577px;top:317px"></div>
<div class="tip" style="left:585px;top:302px;width:219px;height:50px;padding-left:9px;box-sizing:border-box">快速查看是否配对</div>

</body>
</html>
